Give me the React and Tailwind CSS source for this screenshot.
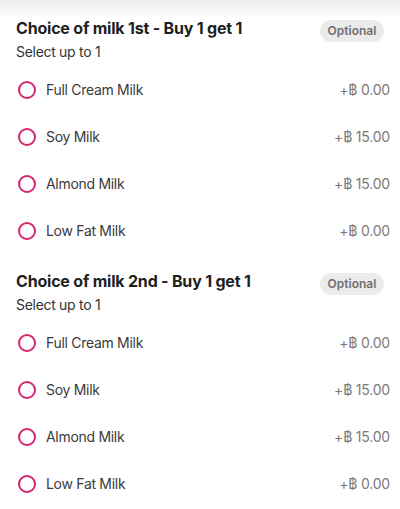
import React from "react";

const sections = [
  { title: "Choice of milk 1st - Buy 1 get 1" },
  { title: "Choice of milk 2nd - Buy 1 get 1" },
];
const options = [
  ["Full Cream Milk", "+฿ 0.00"],
  ["Soy Milk", "+฿ 15.00"],
  ["Almond Milk", "+฿ 15.00"],
  ["Low Fat Milk", "+฿ 0.00"],
];

function Section({ title, first }) {
  return (
    <div className={first ? "pt-[17px]" : "pt-4"}>
      <div className="flex items-start justify-between pl-4 pr-4">
        <div className="text-[16px] leading-[22px] font-bold text-[#1f1f1f] tracking-[-0.2px]">{title}</div>
        <div className="mt-[3px] h-[22px] w-[64px] rounded-full bg-[#ebebeb] flex items-center justify-center text-[12px] font-semibold text-[#707070]">
          Optional
        </div>
      </div>
      <div className="pl-4 text-[14px] leading-[20px] text-[#333333] tracking-[-0.3px] mb-[4px]">Select up to 1</div>
      {options.map(([label, price]) => (
        <div key={label} className="h-[47px] flex items-center pl-[18px] pr-[10px]">
          <div className="w-[18px] h-[18px] rounded-full border-2 border-[#d6246e]" />
          <div className="ml-[10px] flex-1 text-[14px] tracking-[-0.3px] text-[#3a3a3a]">{label}</div>
          <div className="text-[14px] tracking-[-0.2px] text-[#7a7a7a]">{price}</div>
        </div>
      ))}
    </div>
  );
}

export default function App() {
  return (
    <div className="w-[400px] h-[509px] bg-white relative overflow-hidden" style={{ fontFamily: "Inter, 'Noto Sans', sans-serif" }}>
      <div className="absolute top-0 left-0 right-0 h-[18px] bg-gradient-to-b from-[#ededed] to-white" />
      <div className="relative">
        <Section title={sections[0].title} first />
        <Section title={sections[1].title} />
      </div>
    </div>
  );
}
